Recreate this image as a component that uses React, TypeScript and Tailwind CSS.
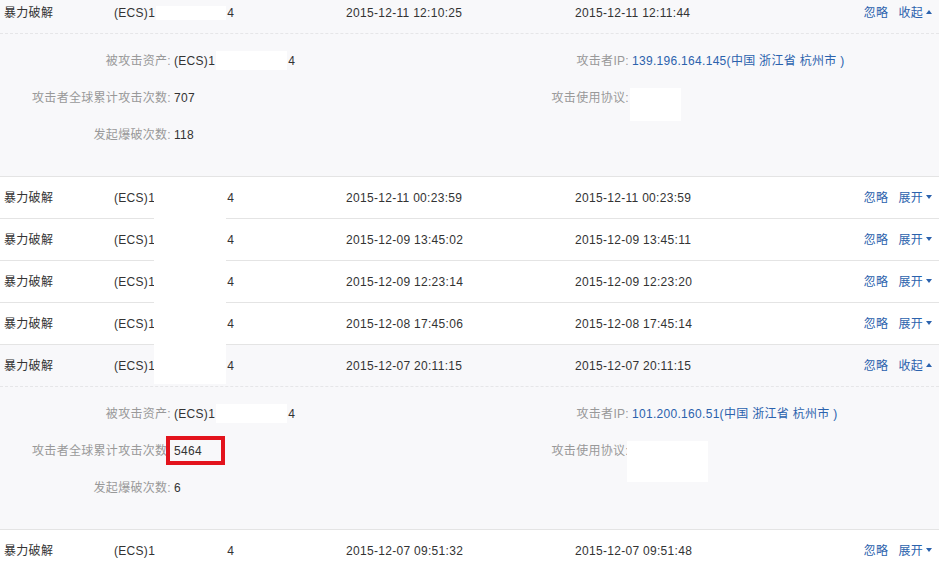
import React from "react";

interface Item {
  type: string;
  start: string;
  end: string;
  expanded?: boolean;
  ip?: string;
  total?: string;
  brute?: string;
  mark?: boolean;
}

const items: Item[] = [
  {
    type: "暴力破解",
    start: "2015-12-11 12:10:25",
    end: "2015-12-11 12:11:44",
    expanded: true,
    ip: "139.196.164.145(中国 浙江省 杭州市 )",
    total: "707",
    brute: "118",
  },
  { type: "暴力破解", start: "2015-12-11 00:23:59", end: "2015-12-11 00:23:59" },
  { type: "暴力破解", start: "2015-12-09 13:45:02", end: "2015-12-09 13:45:11" },
  { type: "暴力破解", start: "2015-12-09 12:23:14", end: "2015-12-09 12:23:20" },
  { type: "暴力破解", start: "2015-12-08 17:45:06", end: "2015-12-08 17:45:14" },
  {
    type: "暴力破解",
    start: "2015-12-07 20:11:15",
    end: "2015-12-07 20:11:15",
    expanded: true,
    ip: "101.200.160.51(中国 浙江省 杭州市 )",
    total: "5464",
    brute: "6",
    mark: true,
  },
  { type: "暴力破解", start: "2015-12-07 09:51:32", end: "2015-12-07 09:51:48" },
];

function Caret({ up }: { up?: boolean }) {
  return up ? (
    <span className="ml-[3px] inline-block w-0 h-0 border-x-[3px] border-x-transparent border-b-[4px] border-b-[#2b62ad] mb-[2px]" />
  ) : (
    <span className="ml-[3px] inline-block w-0 h-0 border-x-[3px] border-x-transparent border-t-[4px] border-t-[#2b62ad] mb-[1px]" />
  );
}

function EventRow({ item, first }: { item: Item; first: boolean }) {
  return (
    <div className={`border-b border-[#e4e4e4] ${item.expanded ? "bg-[#f8f8fa]" : "bg-white"}`}>
      {/* header */}
      <div className="h-[41px] flex items-center">
        <div className="w-[114px] pl-[4px]">{item.type}</div>
        <div className="w-[232px] flex items-center">
          <span>(ECS)1</span>
          {first ? (
            <span className="inline-block w-[70px] h-[14px] bg-white ml-[1px] mr-[1px]" />
          ) : (
            <span className="inline-block w-[72px]" />
          )}
          <span>4</span>
        </div>
        <div className="w-[229px]">{item.start}</div>
        <div>{item.end}</div>
        <div className="ml-auto pr-[7px] flex items-center text-[#2b62ad]">
          <span>忽略</span>
          <span className="ml-[10px]">{item.expanded ? "收起" : "展开"}</span>
          <Caret up={item.expanded} />
        </div>
      </div>

      {/* details */}
      {item.expanded && (
        <div className="border-t border-dashed border-[#e6e6e8] h-[143px] pt-[8px] flex">
          <div className="w-[470px] flex flex-col">
            <div className="h-[37px] flex items-center">
              <span className="w-[171px] text-right text-[#999]">被攻击资产:</span>
              <span className="ml-[3px] flex items-center">
                (ECS)1
                <span className="inline-block w-[71px] h-[19px] bg-white ml-[1px] mr-[1px]" />
                4
              </span>
            </div>
            <div className="h-[37px] flex items-center">
              <span className="w-[171px] text-right text-[#999]">攻击者全球累计攻击次数:</span>
              <span className="ml-[3px] relative">
                {item.total}
                {item.mark && (
                  <span className="absolute left-[-8px] top-[-6px] w-[59px] h-[29px] border-[4px] border-[#e3131c]" />
                )}
              </span>
            </div>
            <div className="h-[37px] flex items-center">
              <span className="w-[171px] text-right text-[#999]">发起爆破次数:</span>
              <span className="ml-[3px]">{item.brute}</span>
            </div>
          </div>
          <div className="flex-1 flex flex-col">
            <div className="h-[37px] flex items-center">
              <span className="w-[159px] text-right text-[#999]">攻击者IP:</span>
              <span className="ml-[3px] text-[#2b62ad]">{item.ip}</span>
            </div>
            <div className="h-[37px] flex items-center">
              <span className="w-[159px] text-right text-[#999]">攻击使用协议:</span>
              {item.mark ? (
                <span className="inline-block w-[81px] h-[41px] bg-white ml-[-2px] mt-[21px]" />
              ) : (
                <span className="inline-block w-[51px] h-[33px] bg-white ml-[1px] mt-[13px]" />
              )}
            </div>
          </div>
        </div>
      )}
    </div>
  );
}

export default function App() {
  return (
    <div
      className="w-[939px] h-[568px] overflow-hidden bg-white text-[12px] tracking-[0.3px] text-[#333] relative"
      style={{ fontFamily: '"Liberation Sans", "Noto Sans CJK SC", sans-serif' }}
    >
      <div className="-mt-[8px]">
        {items.map((item, i) => (
          <EventRow key={i} item={item} first={i === 0} />
        ))}
      </div>
      {/* redaction strip over the asset column */}
      <div className="absolute left-[154px] top-[177px] w-[72px] h-[207px] bg-white" />
    </div>
  );
}
